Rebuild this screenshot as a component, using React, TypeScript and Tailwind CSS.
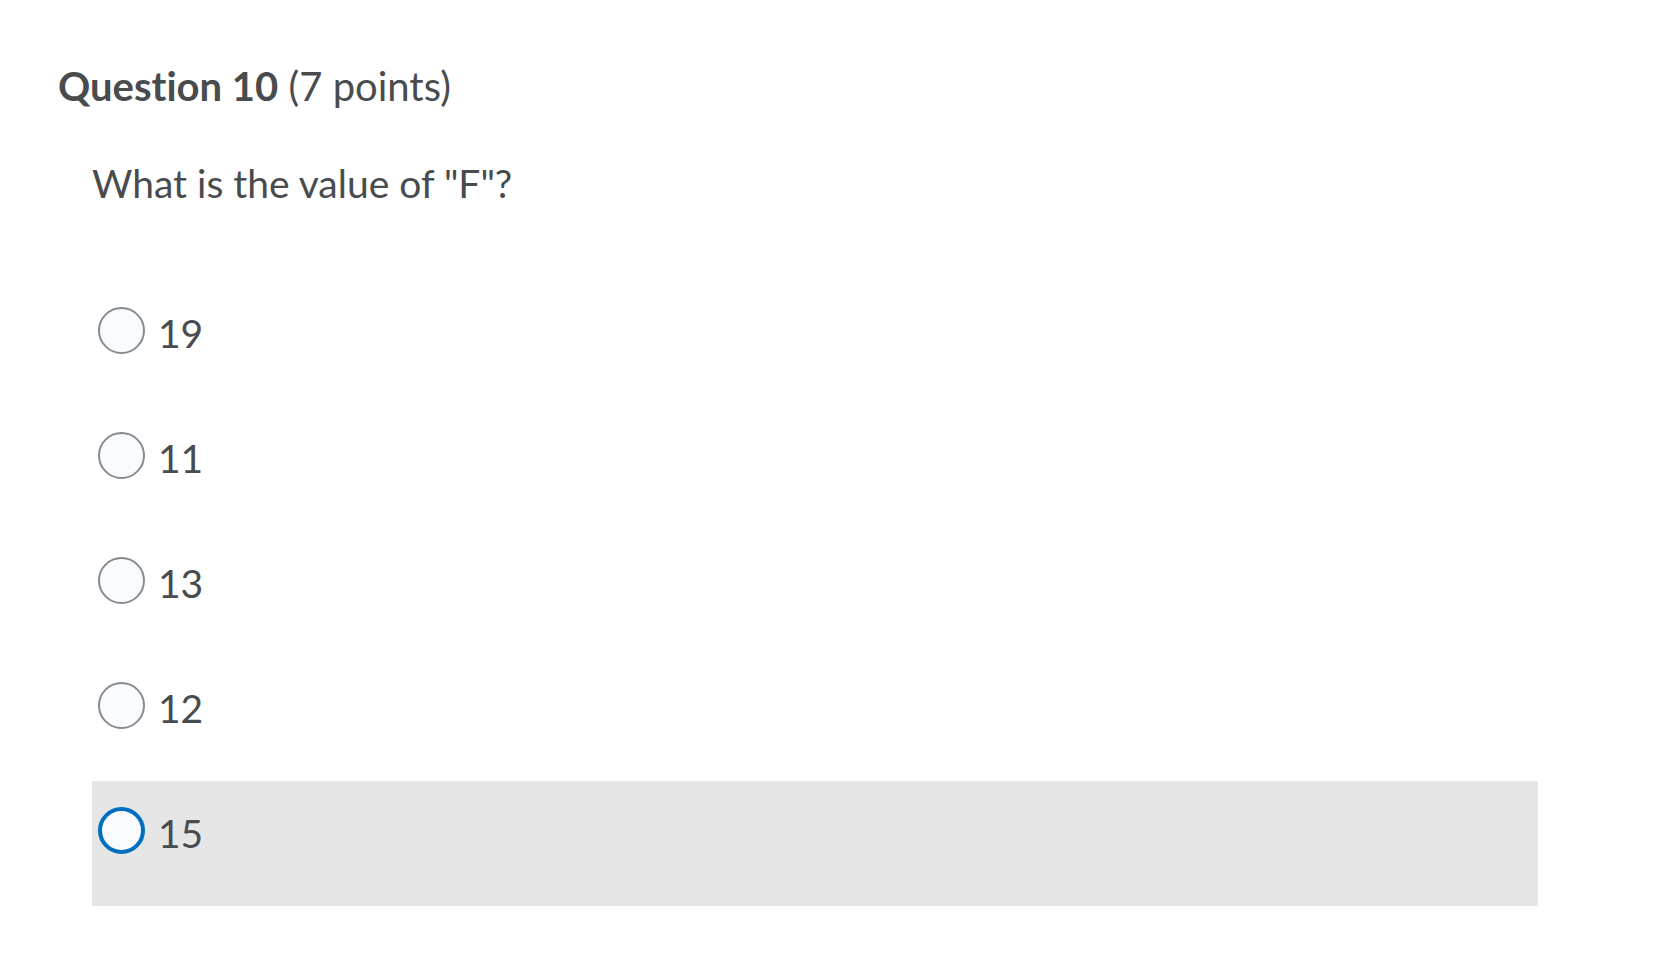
const options = [
  { label: '19', selected: false },
  { label: '11', selected: false },
  { label: '13', selected: false },
  { label: '12', selected: false },
  { label: '15', selected: true },
];

export default function App() {
  return (
    <div className="min-h-screen bg-white text-[#494c4e] font-['Lato','Noto_Sans',sans-serif] [font-variant-ligatures:none] pl-[58px] pt-[62px]">
      <h2 className="text-[40px] leading-[1.2]">
        <span className="font-bold">Question 10</span> (7 points)
      </h2>
      <div className="ml-[34px] mt-[50px]">
        <p className="text-[39px] leading-[1.2]">What is the value of "F"?</p>
        <div className="mt-[74px] w-[1446px]">
          {options.map((o) => (
            <label
              key={o.label}
              className={`flex items-start gap-[13px] h-[125px] pt-[26px] pl-[6px] ${o.selected ? 'bg-[#e6e6e6]' : ''}`}
            >
              <span
                className={`w-[47px] h-[47px] rounded-full bg-[#f9fbff] shrink-0 ${
                  o.selected ? 'border-[4px] border-[#006fbf]' : 'border-2 border-[#868c8f]'
                }`}
              />
              <span className="text-[39px] leading-[1.2] mt-[3px]">{o.label}</span>
            </label>
          ))}
        </div>
      </div>
    </div>
  );
}
